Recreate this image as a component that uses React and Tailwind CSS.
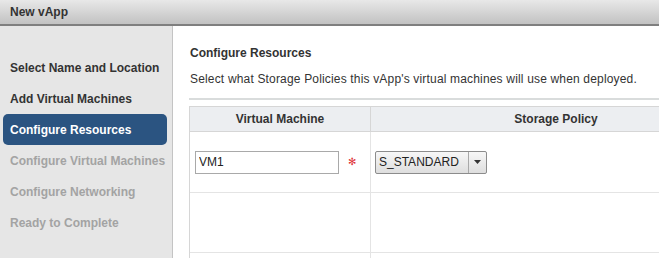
import React from 'react';

const STEPS = [
  { label: 'Select Name and Location', state: 'done' },
  { label: 'Add Virtual Machines', state: 'done' },
  { label: 'Configure Resources', state: 'active' },
  { label: 'Configure Virtual Machines', state: 'todo' },
  { label: 'Configure Networking', state: 'todo' },
  { label: 'Ready to Complete', state: 'todo' },
];

function StepItem({ step }) {
  if (step.state === 'active') {
    return (
      <div className="h-[31px] ml-[3px] mr-[5px] rounded-[5px] bg-[#2b5481] flex items-center pl-[7px] text-white font-bold text-[12px]">
        {step.label}
      </div>
    );
  }
  return (
    <div
      className={
        'h-[31px] flex items-center pl-[10px] font-bold text-[12px] ' +
        (step.state === 'done' ? 'text-[#333333]' : 'text-[#a3a3a3]')
      }
    >
      {step.label}
    </div>
  );
}

function PolicySelect() {
  return (
    <div className="flex h-[23px] w-[112px] rounded-[2px] border border-[#8c8c8c] bg-gradient-to-b from-[#f7f7f7] to-[#dedede] text-[12px] text-[#222]">
      <div className="flex-1 flex items-center pl-[3px]">S_STANDARD</div>
      <div className="w-[18px] border-l border-[#a8a8a8] flex items-center justify-center">
        <svg width="7" height="4" viewBox="0 0 7 4">
          <path d="M0 0h7L3.5 4z" fill="#333" />
        </svg>
      </div>
    </div>
  );
}

export default function App() {
  return (
    <div className="w-[659px] h-[258px] overflow-hidden bg-white font-['Liberation_Sans',Arial,sans-serif] flex flex-col">
      <div className="h-[26px] shrink-0 bg-gradient-to-b from-[#e8e8e8] to-[#c2c2c2] border-b-2 border-[#7f7f7f] flex items-center pl-[10px] text-[12px] font-bold text-[#333]">
        New vApp
      </div>
      <div className="flex flex-1 min-h-0">
        <div className="w-[173px] shrink-0 bg-[#e6e6e6] border-r border-[#c4c4c4] pt-[26px]">
          {STEPS.map(s => <StepItem key={s.label} step={s} />)}
        </div>
        <div className="flex-1 min-w-0 pl-[16px] pt-[20px] text-[12px] text-[#333]">
          <div className="font-bold leading-[14px] pl-[1px]">Configure Resources</div>
          <div className="mt-[12px] leading-[14px] pl-[1px] tracking-[0.17px] whitespace-nowrap">
            Select what Storage Policies this vApp's virtual machines will use when deployed.
          </div>
          <div className="mt-[12px] border-t-2 border-[#d9dcdc] w-[600px]" />
          <div className="mt-[6px] w-[560px] border-l border-t border-[#d6d6d6] grid grid-cols-[181px_379px]">
            <div className="h-[25px] bg-[#eceef1] border-r border-b border-[#d6d6d6] flex items-center justify-center font-bold">
              Virtual Machine
            </div>
            <div className="h-[25px] w-[370px] bg-[#eceef1] border-b border-[#d6d6d6] flex items-center justify-center font-bold">
              Storage Policy
            </div>

            <div className="h-[61px] border-r border-b border-[#e4e4e4] flex items-center pl-[5px]">
              <input
                defaultValue="VM1"
                className="w-[144px] h-[23px] border border-[#a9a9a9] bg-white px-[3px] text-[12px] text-[#222] outline-none"
              />
              <span className="ml-[9px] text-[#e0353b] text-[10px] leading-none">✻</span>
            </div>
            <div className="h-[61px] border-b border-[#e4e4e4] flex items-center pl-[4px]">
              <PolicySelect />
            </div>

            <div className="h-[60px] border-r border-b border-[#e4e4e4]" />
            <div className="h-[60px] border-b border-[#e4e4e4]" />

            <div className="h-[40px] border-r border-[#e4e4e4]" />
            <div className="h-[40px]" />
          </div>
        </div>
      </div>
    </div>
  );
}
